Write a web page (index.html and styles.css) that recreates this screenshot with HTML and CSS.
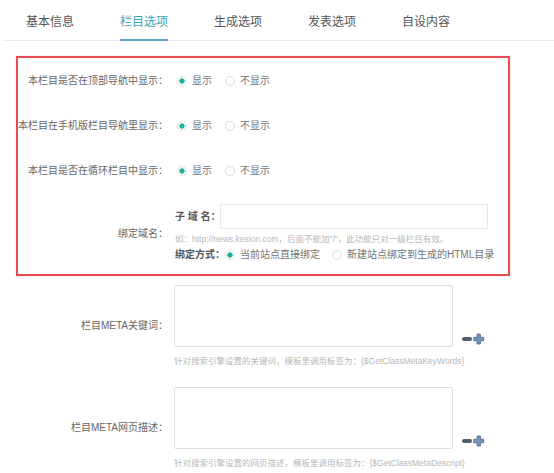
FILE: index.html
```html
<!DOCTYPE html>
<html>
<head>
  <title>栏目选项</title>
  <meta charset="UTF-8">
  <link rel="stylesheet" href="styles.css">
</head>
<body>
  <div class="tabs">
    <div class="tab">基本信息</div>
    <div class="tab active"><span>栏目选项</span></div>
    <div class="tab">生成选项</div>
    <div class="tab">发表选项</div>
    <div class="tab">自设内容</div>
  </div>

  <div class="highlight">
    <div class="row">
      <div class="label">本栏目是否在顶部导航中显示：</div>
      <div class="field radios">
        <label class="radio checked"><i></i>显示</label>
        <label class="radio"><i></i>不显示</label>
      </div>
    </div>
    <div class="row">
      <div class="label">本栏目在手机版栏目导航里显示：</div>
      <div class="field radios">
        <label class="radio checked"><i></i>显示</label>
        <label class="radio"><i></i>不显示</label>
      </div>
    </div>
    <div class="row">
      <div class="label">本栏目是否在循环栏目中显示：</div>
      <div class="field radios">
        <label class="radio checked"><i></i>显示</label>
        <label class="radio"><i></i>不显示</label>
      </div>
    </div>
    <div class="row bind">
      <div class="label">绑定域名：</div>
      <div class="field">
        <div class="sub">
          <b class="sub-name">子 域 名：</b>
          <span class="input"></span>
        </div>
        <div class="tip">如：http://news.kesion.com，后面不能加"/"，此功能只对一级栏目有效。</div>
        <div class="way">
          <b>绑定方式：</b>
          <label class="radio checked"><i></i>当前站点直接绑定</label>
          <label class="radio"><i></i>新建站点绑定到生成的HTML目录</label>
        </div>
      </div>
    </div>
  </div>

  <div class="row meta first">
    <div class="label">栏目META关键词：</div>
    <div class="field">
      <div class="area-line">
        <span class="textarea"></span>
        <svg class="pm" width="26" height="12" viewBox="0 0 26 12">
          <rect x="1" y="4" width="10" height="4" rx="2" fill="#4f5f70"/>
          <path d="M16 1h3.4v3.3h3.3v3.4h-3.3v3.3h-3.4v-3.3h-3.3v-3.4h3.3z" fill="#7394b8" stroke="#4e6680" stroke-width="0.8" stroke-linejoin="round"/>
        </svg>
      </div>
      <div class="tip">针对搜索引擎设置的关键词，模板里调用标签为：{$GetClassMetaKeyWords}</div>
    </div>
  </div>

  <div class="row meta">
    <div class="label">栏目META网页描述：</div>
    <div class="field">
      <div class="area-line">
        <span class="textarea"></span>
        <svg class="pm" width="26" height="12" viewBox="0 0 26 12">
          <rect x="1" y="4" width="10" height="4" rx="2" fill="#4f5f70"/>
          <path d="M16 1h3.4v3.3h3.3v3.4h-3.3v3.3h-3.4v-3.3h-3.3v-3.4h3.3z" fill="#7394b8" stroke="#4e6680" stroke-width="0.8" stroke-linejoin="round"/>
        </svg>
      </div>
      <div class="tip">针对搜索引擎设置的网页描述，模板里调用标签为：{$GetClassMetaDescript}</div>
    </div>
  </div>
</body>
</html>
```

FILE: styles.css
```css
body {
  margin: 0;
  background-color: #fff;
  font-family: 'Liberation Sans', 'Noto Sans CJK SC', sans-serif;
  color: #666;
  overflow: hidden;
}

.tabs {
  display: flex;
  height: 40px;
  margin-left: 2px;
  padding-left: 1px;
  border-bottom: 1px solid #ebebeb;
}

.tab {
  height: 41px;
  margin-bottom: -1px;
  padding: 14px 23px 0;
  box-sizing: border-box;
  font-size: 12px;
  line-height: 16px;
  color: #555;
}

.tab.active {
  color: #3ba3b7;
}

.tab.active span {
  display: inline-block;
  height: 27px;
  box-sizing: border-box;
  border-bottom: 2px solid #56aabb;
}

.highlight {
  width: 490px;
  margin: 15px 0 0 16px;
  border: 2px solid #e54c4f;
  box-shadow: 0 0 1px rgba(229, 76, 79, 0.5);
}

.row {
  display: flex;
  align-items: center;
  height: 45px;
}

.label {
  width: 150px;
  flex-shrink: 0;
  text-align: right;
  white-space: nowrap;
  font-size: 10px;
  line-height: 14px;
  color: #666;
}

.field {
  margin-left: 6px;
  font-size: 10px;
  line-height: 14px;
  color: #737373;
}

.radios {
  display: flex;
  align-items: center;
}

.radio {
  display: flex;
  align-items: center;
  margin-left: 3px;
  margin-right: 10px;
}

.radio i {
  width: 10px;
  height: 10px;
  box-sizing: border-box;
  border: 1px solid #dedede;
  border-radius: 50%;
  margin-right: 5px;
}

.radio.checked i {
  background: radial-gradient(circle, #22b3a0 2.4px, transparent 3px);
}

.bind {
  height: auto;
  padding: 11px 0;
}

.sub {
  display: flex;
  align-items: center;
  margin-left: 1px;
}

.sub-name,
.way b {
  font-weight: bold;
  color: #555;
  white-space: nowrap;
}

.sub-name {
  width: 45px;
}

.input {
  width: 268px;
  height: 25px;
  box-sizing: border-box;
  border: 1px solid #e3e9e9;
}

.tip {
  font-size: 8.5px;
  line-height: 12px;
  color: #b8b8b8;
  white-space: nowrap;
}

.bind .tip {
  margin: 4px 0 2px 1px;
}

.way {
  display: flex;
  align-items: center;
  line-height: 16px;
  margin-left: 1px;
}

.way .radio {
  margin-left: 0;
  margin-right: 12px;
}

.meta {
  height: auto;
  margin-left: 18px;
}

.meta.first {
  margin-top: 9px;
}

.meta + .meta {
  margin-top: 20px;
}

.area-line {
  display: flex;
  align-items: flex-end;
}

.textarea {
  width: 279px;
  height: 62px;
  box-sizing: border-box;
  border: 1px solid #dedede;
  border-radius: 2px;
}

.pm {
  margin: 0 0 2px 8px;
}

.meta .tip {
  margin-top: 8px;
}
```
